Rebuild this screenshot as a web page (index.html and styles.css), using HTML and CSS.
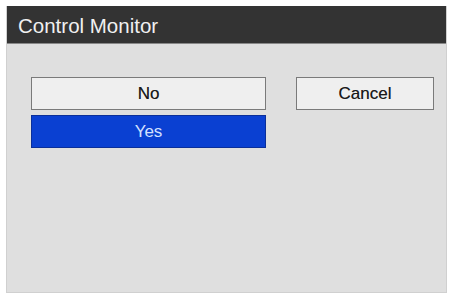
FILE: index.html
```html
<!DOCTYPE html>
<html>
	<head>
		<meta charset="UTF-8">
		<title>Control Monitor</title>
		<link rel="stylesheet" href="styles.css">
	</head>
	<body>
		<div class="dialog">
			<div class="title">Control Monitor</div>
			<div class="content">
				<div class="choices">
					<button class="btn">No</button>
					<button class="btn btn-on">Yes</button>
				</div>
				<button class="btn btn-cancel">Cancel</button>
			</div>
		</div>
	</body>
</html>
```

FILE: styles.css
```css
*{
	margin:0;
	padding:0;
	box-sizing: border-box;
}
body{
	background: #fff;
	padding: 6px 3px 2px 6px;
	font-family: "Liberation Sans", Arial, sans-serif;
}
.dialog{
	width: 441px;
	height: 287px;
	background: #dfdfdf;
	border: 1px solid #d0d0d0;
	border-top: none;
}
.title{
	height: 38px;
	background: #333;
	color: #f0f0f0;
	font-size: 20.5px;
	line-height: 36px;
	padding: 2px 0 0 11px;
	border-bottom: 1px solid #888;
}
.content{
	display: flex;
	align-items: flex-start;
	padding: 33px 0 0 24px;
}
.choices{
	display: flex;
	flex-direction: column;
	gap: 5px;
	width: 235px;
}
.btn{
	height: 33px;
	border: 1px solid #7a7a7a;
	background: #efefef;
	color: #1a1a1a;
	font-family: inherit;
	font-size: 17px;
	outline: none;
	text-shadow: 0 0 0.6px rgba(0,0,0,0.5);
}
.btn-on{
	background: #0a40d2;
	border-color: #0a2f9a;
	color: #d4e0ff;
	text-shadow: none;
}
.btn-cancel{
	width: 138px;
	margin-left: 30px;
}
```
